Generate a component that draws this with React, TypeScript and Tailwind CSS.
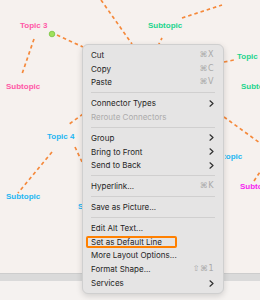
import React from "react";

type Item =
  | { kind: "sep" }
  | { kind: "item"; label: string; shortcut?: string; sub?: boolean; disabled?: boolean; highlight?: boolean };

const items: Item[] = [
  { kind: "item", label: "Cut", shortcut: "⌘X" },
  { kind: "item", label: "Copy", shortcut: "⌘C" },
  { kind: "item", label: "Paste", shortcut: "⌘V" },
  { kind: "sep" },
  { kind: "item", label: "Connector Types", sub: true },
  { kind: "item", label: "Reroute Connectors", disabled: true },
  { kind: "sep" },
  { kind: "item", label: "Group", sub: true },
  { kind: "item", label: "Bring to Front", sub: true },
  { kind: "item", label: "Send to Back", sub: true },
  { kind: "sep" },
  { kind: "item", label: "Hyperlink...", shortcut: "⌘K" },
  { kind: "sep" },
  { kind: "item", label: "Save as Picture..." },
  { kind: "sep" },
  { kind: "item", label: "Edit Alt Text..." },
  { kind: "item", label: "Set as Default Line", highlight: true },
  { kind: "item", label: "More Layout Options..." },
  { kind: "item", label: "Format Shape...", shortcut: "⇧⌘1" },
  { kind: "item", label: "Services", sub: true },
];

const lines: [number, number, number, number][] = [
  [34, 39, 22, 74],
  [57, 35, 83, 47],
  [101, 0, 132, 44],
  [182, 18, 222, 5],
  [158, 46, 162, 38],
  [224, 62, 234, 60],
  [224, 117, 260, 143],
  [254, 181, 260, 172],
  [83, 114, 68, 125],
  [52, 152, 18, 193],
  [75, 147, 83, 164],
];

type Label = { text: string; x: number; y: number; color: string; clipLeft?: number; clipWidth?: number };
const labels: Label[] = [
  { text: "Topic 3", x: 20, y: 26, color: "text-[#ff58a6]" },
  { text: "Subtopic", x: 6, y: 87, color: "text-[#ff58a6]" },
  { text: "Subtopic", x: 148, y: 26, color: "text-[#1dd48d]" },
  { text: "Topic 1", x: 237, y: 57, color: "text-[#1dd48d]" },
  { text: "Subtopic", x: 241, y: 87, color: "text-[#1dd48d]" },
  { text: "Topic 4", x: 47, y: 137, color: "text-[#1fb6f2]" },
  { text: "Subtopic", x: 6, y: 197, color: "text-[#1fb6f2]" },
  { text: "Subtopic", x: 208, y: 157, color: "text-[#1fb6f2]", clipLeft: 225, clipWidth: 35 },
  { text: "Subtopic", x: 240, y: 187, color: "text-[#f51ff0]" },
  { text: "Subtopic", x: 78, y: 207, color: "text-[#1fb6f2]", clipLeft: 78, clipWidth: 4 },
];

function Chevron() {
  return (
    <svg width="5" height="7" viewBox="0 0 5 7" className="block">
      <path d="M1 0.8 L4 3.5 L1 6.2" fill="none" stroke="#2f2f2f" strokeWidth="1.2" strokeLinecap="round" strokeLinejoin="round" />
    </svg>
  );
}

export default function App() {
  return (
    <div className="relative w-[260px] h-[300px] overflow-hidden flex flex-col bg-[#f6f1ee]">
      <div className="relative h-[273px] shrink-0 bg-[#f6f1ee]">
        <svg width="260" height="273" className="absolute left-0 top-0">
          {lines.map(([x1, y1, x2, y2], i) => (
            <line
              key={i}
              x1={x1}
              y1={y1}
              x2={x2}
              y2={y2}
              stroke="#f5893b"
              strokeWidth="1.7"
              strokeDasharray="3.5 3"
            />
          ))}
          <circle cx="52" cy="34" r="2.8" fill="#9fe15c" stroke="#79c343" strokeWidth="0.8" />
        </svg>
        {labels.map((l, i) =>
          l.clipLeft !== undefined ? (
            <div
              key={i}
              className="absolute overflow-hidden h-[10px]"
              style={{ left: l.clipLeft, top: l.y - 5, width: l.clipWidth }}
            >
              <div
                className={`absolute top-0 whitespace-nowrap font-bold text-[8px] leading-[10px] ${l.color}`}
                style={{ left: l.x - l.clipLeft, fontFamily: '"Liberation Sans", Arial, sans-serif' }}
              >
                {l.text}
              </div>
            </div>
          ) : (
            <div
              key={i}
              className={`absolute whitespace-nowrap font-bold text-[8px] leading-[10px] ${l.color}`}
              style={{ left: l.x, top: l.y - 5, fontFamily: '"Liberation Sans", Arial, sans-serif' }}
            >
              {l.text}
            </div>
          )
        )}
      </div>
      <div className="h-[8px] shrink-0 bg-[#dadada] border-t border-[#cdcdcd]" />
      <div className="flex-1 bg-[#f5f2f0]" />

      <div
        className="absolute left-[82px] top-[44px] w-[142px] rounded-[6px] bg-[#e5e4e4] border border-[#cfcfcf] shadow-[0_2px_6px_rgba(0,0,0,0.15)] py-[3px]"
        style={{ fontFamily: 'Inter, "Liberation Sans", sans-serif' }}
      >
        {items.map((it, i) =>
          it.kind === "sep" ? (
            <div key={i} className="h-[7px] flex items-center mx-[8px]">
              <div className="h-px w-full bg-[#d0cfcf]" />
            </div>
          ) : (
            <div
              key={i}
              className="relative h-[13.8px] flex items-center justify-between pl-[8px] pr-[9px] text-[8px]"
            >
              {it.highlight && (
                <div className="absolute left-[3px] top-[1.5px] w-[91px] h-[12px] border-2 border-[#ff8000] rounded-[2px]" />
              )}
              <span className={it.disabled ? "text-[#acabab]" : "text-[#1f1f1f]"}>{it.label}</span>
              {it.shortcut && (
                <span
                  className="text-[#a9a9a9] text-[8px] tracking-[0.5px]"
                  style={{ fontFamily: '"DejaVu Sans", Inter, sans-serif' }}
                >
                  {it.shortcut}
                </span>
              )}
              {it.sub && <Chevron />}
            </div>
          )
        )}
      </div>
    </div>
  );
}
